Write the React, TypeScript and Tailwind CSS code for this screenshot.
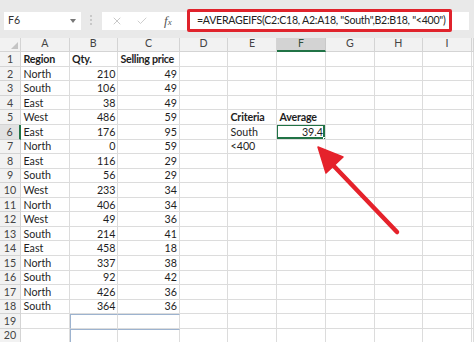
import React from "react";
import { X, Check } from "lucide-react";

type Row = {
  a?: string;
  b?: string;
  c?: string;
  e?: string;
  f?: string;
  bold?: boolean;
  boldEF?: boolean;
};

const rows: Row[] = [
  { a: "Region", b: "Qty.", c: "Selling price", bold: true },
  { a: "North", b: "210", c: "49" },
  { a: "South", b: "106", c: "49" },
  { a: "East", b: "38", c: "49" },
  { a: "West", b: "486", c: "59", e: "Criteria", f: "Average", boldEF: true },
  { a: "East", b: "176", c: "95", e: "South", f: "39.4" },
  { a: "North", b: "0", c: "59", e: "<400" },
  { a: "East", b: "116", c: "29" },
  { a: "South", b: "56", c: "29" },
  { a: "West", b: "233", c: "34" },
  { a: "North", b: "406", c: "34" },
  { a: "West", b: "49", c: "36" },
  { a: "South", b: "214", c: "41" },
  { a: "East", b: "458", c: "18" },
  { a: "North", b: "337", c: "38" },
  { a: "South", b: "92", c: "42" },
  { a: "North", b: "426", c: "36" },
  { a: "South", b: "364", c: "36" },
  {},
  {},
];

const cols = ["A", "B", "C", "D", "E", "F", "G", "H", "I", ""];

const gridCols =
  "grid grid-cols-[21px_48.5px_48.5px_62px_48px_49px_49px_48.5px_48.5px_49px_1fr]";

const cell = "h-[14.55px] border-r border-b border-[#dcdcdc] flex items-center overflow-hidden whitespace-nowrap text-[10.7px]";

const FormulaBar = () => (
  <div className="h-[37.5px] bg-[#e9e9e9] flex items-start relative">
    <div className="ml-[4px] mt-[12px] w-[77px] h-[18px] bg-white flex items-center justify-between pl-[4px] pr-[5px]">
      <span className="text-[10.6px] text-[#333]">F6</span>
      <svg width="6" height="4" viewBox="0 0 6 4">
        <path d="M0 0 L6 0 L3 4 Z" fill="#777" />
      </svg>
    </div>
    <div className="ml-[9px] mt-[15px] flex flex-col gap-[2px]">
      <span className="w-[2px] h-[2px] bg-[#bdbdbd] rounded-full" />
      <span className="w-[2px] h-[2px] bg-[#bdbdbd] rounded-full" />
      <span className="w-[2px] h-[2px] bg-[#bdbdbd] rounded-full" />
    </div>
    <div className="ml-[10px] mt-[12px] w-[85px] h-[17.5px] bg-white flex items-center">
      <X className="ml-[9px] text-[#b5b5b5]" size={12} strokeWidth={1.5} />
      <Check className="ml-[13px] text-[#bdbdbd]" size={12} strokeWidth={1.5} />
      <span className="ml-[16px] font-['Liberation_Serif',serif] italic text-[13px] text-[#555] leading-none">
        f<span className="text-[9px]">x</span>
      </span>
    </div>
    <div className="mt-[9.3px] w-[265px] h-[22.5px] bg-white border-[3px] border-[#e0232c] rounded-[2px] flex items-center pl-[7px] overflow-hidden">
      <span className="text-[10.6px] text-[#222] whitespace-nowrap tracking-[-0.28px]">
        =AVERAGEIFS(C2:C18, A2:A18, "South",B2:B18, "&lt;400")
      </span>
    </div>
    <div className="mt-[12px] w-[17px] h-[17.5px] bg-white" />
  </div>
);

const Header = () => (
  <div className={gridCols}>
    <div className="h-[14.8px] bg-[#f2f2f2] border-r border-b border-[#d4d4d4] flex items-end justify-end pr-[2px] pb-[2px]">
      <svg width="7" height="7" viewBox="0 0 7 7">
        <path d="M7 0 L7 7 L0 7 Z" fill="#c4c4c4" />
      </svg>
    </div>
    {cols.map((c, i) =>
      c === "F" ? (
        <div
          key={i}
          className="h-[14.8px] bg-[#d3d3d3] border-r border-[#c8c8c8] border-b-2 border-b-[#217346] flex items-center justify-center text-[10.6px] text-[#2f4f3a]"
        >
          {c}
        </div>
      ) : (
        <div
          key={i}
          className="h-[14.8px] bg-[#f2f2f2] border-r border-b border-[#d4d4d4] flex items-center justify-center text-[10.6px] text-[#444]"
        >
          {c}
        </div>
      )
    )}
  </div>
);

export default function App() {
  return (
    <div className="w-[474px] h-[342px] overflow-hidden bg-white relative font-['Lato',sans-serif] text-[#1e1e1e]">
      <FormulaBar />
      <Header />
      {rows.map((r, i) => {
        const n = i + 1;
        const selRow = n === 6;
        const blueTop = n === 19 || n === 20;
        return (
          <div key={n} className={gridCols}>
            <div
              className={
                selRow
                  ? "h-[14.55px] bg-[#e2e2e2] border-r-2 border-r-[#217346] border-b border-[#d4d4d4] flex items-center justify-center text-[10.7px] text-[#444]"
                  : "h-[14.55px] bg-[#f2f2f2] border-r border-b border-[#d4d4d4] flex items-center justify-center text-[10.7px] text-[#444]"
              }
            >
              {n}
            </div>
            <div className={`${cell} pl-[2.5px] ${r.bold ? "font-bold tracking-[-0.2px]" : ""}`}>{r.a}</div>
            <div
              className={`${cell} ${r.bold ? "font-bold tracking-[-0.2px] pl-[2.5px]" : "justify-end pr-[1.5px]"} ${
                blueTop ? "border-t border-t-[#9db3cf] border-l border-l-[#9db3cf]" : ""
              }`}
            >
              {r.b}
            </div>
            <div
              className={`${cell} ${r.bold ? "font-bold tracking-[-0.3px] pl-[2.5px]" : "justify-end pr-[2px]"} ${
                blueTop ? "border-t border-t-[#9db3cf]" : ""
              }`}
            >
              {r.c}
            </div>
            <div className={cell} />
            <div className={`${cell} pl-[2.5px] ${r.boldEF ? "font-bold tracking-[-0.2px]" : ""}`}>{r.e}</div>
            <div className={`${cell} relative ${r.boldEF ? "font-bold tracking-[-0.2px] pl-[2.5px]" : "justify-end pr-[2px]"}`}>
              {r.f}
              {selRow && (
                <>
                  <div className="absolute -left-[1px] -top-[1px] right-0 bottom-0 border-2 border-[#217346]" />
                  <div className="absolute -right-[2px] -bottom-[2px] w-[4px] h-[4px] bg-[#217346] border border-white" />
                </>
              )}
            </div>
            <div className={cell} />
            <div className={cell} />
            <div className={cell} />
            <div className={cell} />
          </div>
        );
      })}
      <svg className="absolute left-0 top-0 pointer-events-none" width="474" height="342" viewBox="0 0 474 342">
        <line x1="397" y1="232" x2="331" y2="163" stroke="#e5222b" strokeWidth="4.5" strokeLinecap="round" />
        <path d="M318 147 L326 173 L343 157 Z" fill="#e5222b" stroke="#e5222b" strokeWidth="1.5" strokeLinejoin="round" />
      </svg>
    </div>
  );
}
